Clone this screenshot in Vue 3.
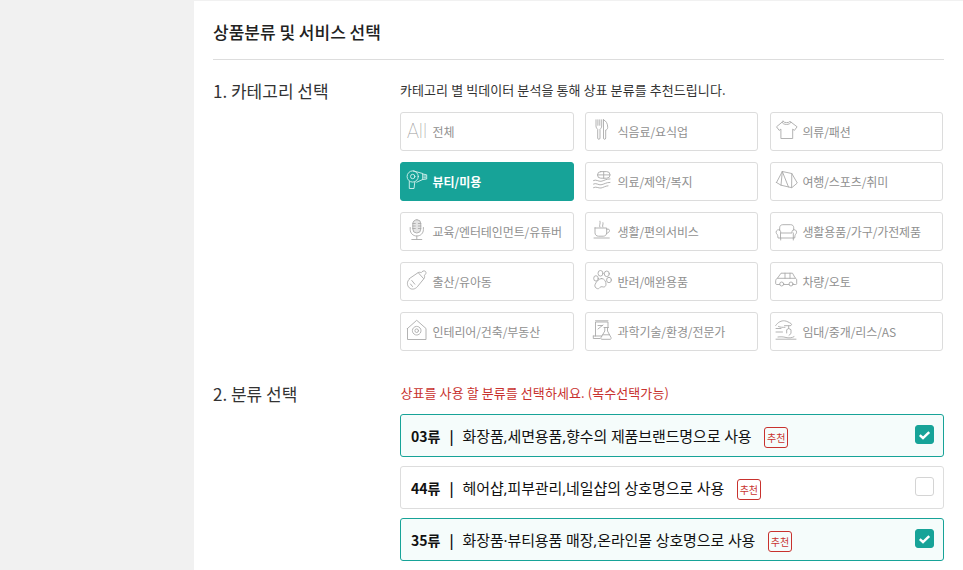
<script setup>
const categories = [
  { label: '전체', icon: 'all' },
  { label: '식음료/요식업', icon: 'food' },
  { label: '의류/패션', icon: 'shirt' },
  { label: '뷰티/미용', icon: 'dryer', active: true },
  { label: '의료/제약/복지', icon: 'pill' },
  { label: '여행/스포츠/취미', icon: 'tent' },
  { label: '교육/엔터테인먼트/유튜버', icon: 'mic' },
  { label: '생활/편의서비스', icon: 'cup' },
  { label: '생활용품/가구/가전제품', icon: 'sofa' },
  { label: '출산/유아동', icon: 'bottle' },
  { label: '반려/애완용품', icon: 'paw' },
  { label: '차량/오토', icon: 'car' },
  { label: '인테리어/건축/부동산', icon: 'house' },
  { label: '과학기술/환경/전문가', icon: 'lab' },
  { label: '임대/중개/리스/AS', icon: 'hand' },
]
const classes = [
  { no: '03류', text: '화장품,세면용품,향수의 제품브랜드명으로 사용', checked: true },
  { no: '44류', text: '헤어샵,피부관리,네일샵의 상호명으로 사용', checked: false },
  { no: '35류', text: '화장품·뷰티용품 매장,온라인몰 상호명으로 사용', checked: true },
]
</script>

<template>
  <div class="page">
    <main class="panel">
      <h1 class="title">상품분류 및 서비스 선택</h1>
      <section class="row first">
        <h2 class="step">1. 카테고리 선택</h2>
        <div class="body">
          <p class="hint">카테고리 별 빅데이터 분석을 통해 상표 분류를 추천드립니다.</p>
          <div class="grid">
            <button v-for="c in categories" :key="c.label" class="tile" :class="{ active: c.active }">
              <span v-if="c.icon === 'all'" class="all">All</span>
              <svg v-else class="ico" viewBox="0 0 24 24" fill="none" stroke="currentColor" stroke-width="0.9" stroke-linejoin="round" stroke-linecap="round">
                <template v-if="c.icon === 'food'">
                  <path d="M6 .8V7c0 1.500.8 2.500 1.700 3.300V19c0 1.800 2.300 1.800 2.300 0v-8.700c.9-.8 1.700-1.800 1.700-3.300V.8M7.900.8v5.500M9.800.8v5.500" />
                  <path d="M13.500.8c2.800 1 4.200 4 4.200 7.500 0 1.700-.9 2.500-2 2.700V19c0 1.800-2.200 1.800-2.200 0V.8z" />
                </template>
                <template v-else-if="c.icon === 'shirt'">
                  <path d="M8 2.400 1.500 7.800l2.700 3.600 1.700-1.300V19.500h11.800V10.100l1.700 1.300 2.700-3.600L15 2.400c-1 1.700-6 1.700-7 0z" />
                  <path d="M7 3.300c1 3 8 3 9 0" />
                </template>
                <template v-else-if="c.icon === 'dryer'">
                  <circle cx="7.700" cy="7.500" r="5.600" />
                  <circle cx="7.700" cy="7.500" r="2.200" />
                  <path d="M8.300 1.900l9.400 2.600v6l-6 2.700M17.700 5l4 .8v4.200l-4 .5M4.300 12.500v7h4.700l.8-6.500M18.700 7h2M18.700 8.800h2" />
                </template>
                <template v-else-if="c.icon === 'pill'">
                  <rect x="7.500" y="2.600" width="12.500" height="6.600" rx="3.300" />
                  <path d="M13.700 2.600v6.600M7.500 5.900h12.500M3.500 11.500c2.500-1.500 5 1.200 7.500.8 3-.4 5-2.500 9-2.400M3.500 15c2.500-1.500 5 1.200 7.500.8 3-.4 5-2.500 9-2.400M3.500 18.600c2.500-1.500 5 .8 7.500.4 2.500-.4 4-2 7-2.200" />
                </template>
                <template v-else-if="c.icon === 'tent'">
                  <path d="M1.500 13.500 7.300 2.500l9.500 2 5.500 9.500-5.500 4.700-10.800-2.500-4.500-2.700zM7.300 2.500 6 16.200M7.300 2.500l6.200 15.500M16.800 4.500l-.2 14" />
                </template>
                <template v-else-if="c.icon === 'mic'">
                  <rect x="7.800" y=".7" width="8" height="13.300" rx="4" fill="currentColor" fill-opacity="0.3" />
                  <path d="M7.800 4.500h2.500M7.800 7h2.500M7.800 9.500h2.500M13.300 4.500h2.500M13.300 7h2.500M13.300 9.500h2.500M5.200 8.500v2c0 3.800 2.900 6.500 6.600 6.500s6.600-2.700 6.600-6.500v-2M11.800 17v3.300M6.800 20.500h10" />
                </template>
                <template v-else-if="c.icon === 'cup'">
                  <path d="M5 9h11.700v4.800c0 2-1.500 3.400-3.400 3.400H8.400C6.500 17.200 5 15.800 5 13.800V9zM16.700 10.200h1.500c1.200 0 1.600 1.100 1.100 2.200s-1.500 1.700-2.800 1.900M4 19h15.300M9.800 8c-1-2 1-3 .2-5.800M12.800 8c-1-1.500.8-2.300.2-4.300" />
                </template>
                <template v-else-if="c.icon === 'sofa'">
                  <path d="M4.700 11V8.700c0-2 1.500-3 3-3h8c1.600 0 3 1 3 3V11M4.700 11c-1.800-.8-3.600.3-3.600 2.200 0 1.600 1.400 2 1.600 3.300l.3 2.500h16.700l.3-2.500c.2-1.300 1.600-1.700 1.600-3.300 0-1.900-1.800-3-3.600-2.200-1.100.5-1 2-1 3H5.700c0-1 .1-2.500-1-3zM5.500 14v5M18.300 14v5M5.700 19v2M18.300 19v2" />
                </template>
                <template v-else-if="c.icon === 'bottle'">
                  <path d="M4.500 9.500 13 3.700c1.300-.8 2.300-.4 3.200 0 .8-1.200 2.700-2.700 4.200-1.300 1.400 1.500.1 3.200-1.100 4 .6 1.300.4 2.300-.5 3.400l-6.500 8c-2.200 2.500-5.700 3.200-8 1-2.600-2.400-2.400-6.500-.3-8.300zM6.800 11.500l3 3.700M13.500 4l5 5.500M5.500 15l2 2.500" />
                </template>
                <template v-else-if="c.icon === 'paw'">
                  <ellipse cx="10.500" cy="4.300" rx="2.500" ry="2.800" />
                  <ellipse cx="16.800" cy="4.800" rx="2.500" ry="2.800" />
                  <ellipse cx="6" cy="9.400" rx="2.300" ry="2.700" />
                  <ellipse cx="19" cy="11" rx="2.400" ry="2.700" />
                  <path d="M11.700 9.500c2.800 0 4.400 3.300 4.300 5.700-.1 2-1.300 3-2.700 2.800-1-.1-1.500-.6-2.500-.2-1 .5-1.700 2.300-3.300 1.900-2-.5-3.400-2.400-2.300-4.500 1.300-2.700 3.600-5.700 6.500-5.700z" />
                </template>
                <template v-else-if="c.icon === 'car'">
                  <path d="M4.700 15.500H1.500c-.7 0-.8-.7-.8-1.200v-2.800c0-1 .7-1.700 1.700-2.200L6 4.200h11.500l2.500 4.500 1 .8c.5.400.7.900.7 1.500v3.700c0 .6-.5.800-1 .8h-2.700M8.700 15.500h5.300M2.500 9.300H20M10 4.200v5M15 4.200v5" />
                  <circle cx="6.700" cy="15" r="2" />
                  <circle cx="16" cy="15" r="2" />
                </template>
                <template v-else-if="c.icon === 'house'">
                  <path d="M2.500 9.500 11.700 1.300 21 9.500v11H2.500v-11z" />
                  <circle cx="11.700" cy="11.700" r="4.300" stroke-dasharray="2 .8" />
                  <circle cx="11.700" cy="11.700" r="1.800" />
                </template>
                <template v-else-if="c.icon === 'lab'">
                  <path d="M5.500 17V3h12.500v5M5.500 1.800h12.500M8 6.500h4.500M8 10l5-4M3.300 17h8.500M3.300 17v2.500h6.700M14 8.500h4.500M14.800 8.500v3.500l-3.800 6.500c-.5 1 .2 1.800 1 1.800h8c1 0 1.500-.9 1-1.800L17.500 12V8.500M12.700 15.800h6.800" />
                </template>
                <template v-else-if="c.icon === 'hand'">
                  <path d="M.7 6.500C3 3 6.500 1.500 9.500 1.800c2.500.3 4.500 1.700 6.500 2.700 1 .5.700 2.200-.9 2.200H9.500M3.500 7.500c2 1 4 .8 6.500.8M1 9.500h5M13.700 7v2.500l-2 1.200v3.300M13.700 9.500l2.300 1.200v3.800l-2 1.800M1 13h6.500M3 18c3-.3 5-.3 8 .5 2.500.7 6 .5 8-.8M1 20.200h20" />
                </template>
              </svg>
              <span class="label">{{ c.label }}</span>
            </button>
          </div>
        </div>
      </section>
      <section class="row second">
        <h2 class="step">2. 분류 선택</h2>
        <div class="body">
          <p class="warn">상표를 사용 할 분류를 선택하세요. (복수선택가능)</p>
          <div class="list">
            <div v-for="k in classes" :key="k.no" class="item" :class="{ on: k.checked }">
              <div class="item-text">
                <b>{{ k.no }}</b><span class="bar">|</span><span class="desc">{{ k.text }}</span>
                <em class="tag">추천</em>
              </div>
              <span class="check">
                <svg v-if="k.checked" viewBox="0 0 18 18" width="18" height="18" fill="none" stroke="#fff" stroke-width="2.600">
                  <path d="M4 9.200l3.400 3L14 6" />
                </svg>
              </span>
            </div>
          </div>
        </div>
      </section>
    </main>
  </div>
</template>

<style>
html, body { margin: 0; background: #f1f1f1; }
</style>

<style scoped>
.page {
  width: 963px;
  height: 570px;
  overflow: hidden;
  background: #f1f1f1;
  padding: 1px 0 0 194px;
  box-sizing: border-box;
  font-family: "Noto Sans CJK KR", "Noto Sans", sans-serif;
}
.panel {
  background: #fff;
  height: 600px;
  padding: 0 19px;
  box-sizing: border-box;
}
.title {
  margin: 0;
  height: 58px;
  line-height: 62px;
  font-size: 17px;
  font-weight: 500;
  color: #222;
  border-bottom: 1px solid #ddd;
}
.row { display: flex; }
.first { padding-top: 20px; }
.second { padding-top: 32px; }
.step {
  width: 187px;
  flex: none;
  margin: 1px 0 0;
  font-size: 17px;
  line-height: 20px;
  font-weight: 400;
  color: #333;
}
.body { width: 544px; flex: none; }
.hint, .warn {
  margin: 0;
  font-size: 13px;
  line-height: 20px;
  letter-spacing: 0.08px;
  color: #333;
}
.warn { color: #c8322e; padding-left: 0.500px; }
.grid {
  margin-top: 12px;
  display: grid;
  grid-template-columns: 173.600px 173.300px 173.200px;
  column-gap: 11.500px;
  row-gap: 11px;
}
.tile {
  height: 39px;
  display: flex;
  align-items: center;
  gap: 3.500px;
  padding: 0 0 1px 4px;
  border: 1px solid #dcdcdc;
  border-radius: 3px;
  background: #fff;
  color: #aaa;
  font: inherit;
  font-size: 12px;
  text-align: left;
  white-space: nowrap;
  box-sizing: border-box;
  min-width: 0;
}
.tile.active {
  background: #17a398;
  border-color: #17a398;
  color: #d6f2ee;
  font-weight: 700;
}
.ico { width: 24px; height: 24px; flex: none; }
.all {
  width: 24px;
  flex: none;
  text-align: center;
  font-family: Roboto, sans-serif;
  font-size: 20px;
  font-weight: 100;
  color: #999;
}
.label { color: #909090; letter-spacing: -0.1px; }
.active .label { color: #fff; letter-spacing: 0; }
.list { margin-top: 11px; display: flex; flex-direction: column; gap: 9px; }
.item {
  height: 41px;
  display: flex;
  align-items: center;
  justify-content: space-between;
  padding: 0 9px 0 10px;
  border: 1px solid #ddd;
  border-radius: 3px;
  background: #fff;
}
.item.on { border-color: #17a398; background: #f5fcfb; }
.item-text { font-size: 14px; color: #111; display: flex; align-items: center; white-space: nowrap; }
.item-text b { font-weight: 700; }
.bar { margin: 0 9px; font-weight: 700; }
.desc { font-family: "Noto Sans", "Noto Sans CJK KR", sans-serif; font-size: 15px; letter-spacing: -0.12px; }
.tag {
  margin: 3px 0 0 12.500px;
  font-family: "Noto Sans CJK KR", sans-serif;
  font-style: normal;
  font-size: 10px;
  line-height: 19px;
  padding: 0 2px;
  border: 1px solid #c8322e;
  border-radius: 3px;
  color: #c8322e;
}
.check {
  width: 17px;
  height: 17px;
  border: 1px solid #d4d4d4;
  border-radius: 3px;
  margin-top: -2px;
  display: flex;
  align-items: center;
  justify-content: center;
  background: #fff;
}
.on .check { background: #17a398; border-color: #17a398; }
</style>
